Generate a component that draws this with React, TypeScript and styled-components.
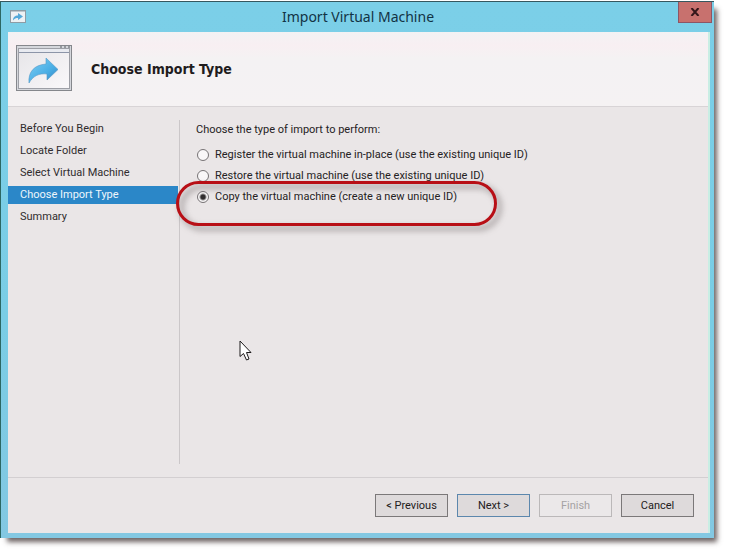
import React, { useState } from "react";
import styled, { createGlobalStyle, css } from "styled-components";

const uiFont = 'Roboto, "Noto Sans", sans-serif';
const headingFont = '"DejaVu Sans Condensed", "Noto Sans", sans-serif';

const GlobalStyle = createGlobalStyle`
  *, *::before, *::after { box-sizing: border-box; }
  body {
    margin: 0;
    background: #fff;
    color: #252223;
    font-family: "Noto Sans", sans-serif;
    font-size: 11px;
  }
`;

const Desktop = styled.div`
  display: flex;
  min-height: 100vh;
  padding: 1px 15px 15px 0;
  overflow: hidden;
`;

const Dialog = styled.section`
  position: relative;
  flex: 1;
  display: flex;
  flex-direction: column;
  min-width: 0;
  padding: 0 4px 5px 7px;
  background: linear-gradient(#7bcfe8, #7acde5 60%, #83c8e2);
  border-top: 1px solid #36575f;
  border-left: 1px solid #2c6763;
  box-shadow: 5px 6px 5px -2px rgba(60, 48, 48, 0.75);
`;

const TitleBar = styled.header`
  display: flex;
  align-items: center;
  height: 30px;
  padding-left: 2px;
`;

const Title = styled.h1`
  flex: 1;
  margin: 0;
  padding-left: 12px;
  text-align: center;
  font: 400 14px/30px "Noto Sans", sans-serif;
  color: #123345;
`;

const CloseButton = styled.button`
  display: grid;
  place-items: center;
  align-self: flex-start;
  width: 34px;
  height: 21px;
  margin-right: -2px;
  padding: 0;
  border: 1px solid #8d5565;
  border-top: 0;
  background: #c8716e;
`;

const Content = styled.div`
  flex: 1;
  display: flex;
  flex-direction: column;
  background: #eae6e7;
  border-right: 2px solid #c9eee4;
`;

const Banner = styled.div`
  display: flex;
  align-items: center;
  gap: 18px;
  height: 75px;
  padding: 0 8px;
  background: linear-gradient(#f3f2f4, #f8eff2 18%, #f4f2f3 36%, #f5f2f3);
  border-bottom: 1px solid #d8d4d6;
`;

const Heading = styled.h2`
  margin: 0;
  font: 700 14px/20px ${headingFont};
  color: #1f1c1d;
`;

const Columns = styled.div`
  flex: 1;
  display: flex;
  padding: 13px 0;
`;

const Steps = styled.nav`
  display: flex;
  flex-direction: column;
  gap: 4px;
  width: 172px;
  padding-right: 1px;
  border-right: 1px solid #cbc7c9;
`;

const Step = styled.a<{ $current?: boolean }>`
  padding-left: 12px;
  font: 400 11px/18px ${uiFont};
  color: #302c2e;
  text-decoration: none;
  ${(p) =>
    p.$current &&
    css`
      background: #2b87c8;
      color: #eef6fc;
    `}
`;

const Choices = styled.fieldset`
  position: relative;
  flex: 1;
  display: flex;
  flex-direction: column;
  gap: 3px;
  min-width: 0;
  margin: 0;
  padding: 0 0 0 16px;
  border: 0;
`;

const Legend = styled.legend`
  padding: 0 0 6px;
  font: 400 11px/20px ${uiFont};
`;

const Choice = styled.label`
  position: relative;
  display: flex;
  align-items: center;
  align-self: flex-start;
  gap: 6px;
  padding-left: 1px;
  font: 400 11px/18px ${uiFont};
  white-space: nowrap;
`;

const Radio = styled.input`
  appearance: none;
  width: 12px;
  height: 12px;
  margin: 0;
  border: 1px solid #777375;
  border-radius: 50%;
  background: #f9f7f8;
  &:checked {
    background: radial-gradient(circle, #302d2e 0 2px, #f9f7f8 4px);
  }
`;

const Highlight = styled.span`
  position: absolute;
  top: -7px;
  left: -20px;
  right: -40px;
  height: 45px;
  border: 3px solid #b80f16;
  border-radius: 23px;
  filter: drop-shadow(4px 4px 3px rgba(80, 70, 70, 0.6));
  pointer-events: none;
`;

const Pointer = styled.svg`
  position: absolute;
  top: 194px;
  left: 59px;
  pointer-events: none;
`;

const Footer = styled.footer`
  display: flex;
  justify-content: flex-end;
  gap: 9px;
  padding: 16px 14px;
  border-top: 1px solid #d3cfd1;
`;

const Button = styled.button<{ $primary?: boolean }>`
  width: 73px;
  height: 23px;
  padding: 0;
  border: 1px solid ${(p) => (p.$primary ? "#5c87ad" : "#7b7879")};
  border-radius: 0;
  background: #dedadb;
  color: #232021;
  font: 400 11px/18px ${uiFont};
  &:disabled {
    border-color: #bbb8b9;
    background: #ebe8e9;
    color: #a5a2a3;
  }
`;

const arrow = "M13 38C12 27 18 20 30 19V13L42 24.500L31 35V29C23 28 17 31 13 38Z";

function WindowIcon() {
  return (
    <svg width="16" height="14" viewBox="0 0 16 14" aria-hidden="true">
      <rect x=".5" y=".5" width="15" height="12" fill="#edf1f4" stroke="#8d9ca5" />
      <path d="M1 1.5H15" stroke="#bdc6cc" />
      <path d="M3 10.500C3 7 5 5.500 8 5.500V3L13 6.500L8 10V8C6 8 4.500 8.500 3 10.500Z" fill="#55a9d9" />
    </svg>
  );
}

function ImportIcon() {
  return (
    <svg width="57" height="48" viewBox="0 0 57 48" aria-hidden="true">
      <defs>
        <linearGradient id="arrow-fill" x1="0" y1="0" x2="1" y2="1">
          <stop stopColor="#82d0f4" />
          <stop offset=".6" stopColor="#49aee5" />
          <stop offset="1" stopColor="#347fbd" />
        </linearGradient>
        <linearGradient id="pane-fill" x1="0" y1="0" x2="1" y2="1">
          <stop stopColor="#e6e5e8" />
          <stop offset="1" stopColor="#faf8fa" />
        </linearGradient>
      </defs>
      <rect x=".5" y=".5" width="55" height="45" fill="#d5d7dc" stroke="#85878c" />
      <rect x="2.500" y="3.500" width="51" height="40" fill="url(#pane-fill)" stroke="#9d9fa6" />
      <rect x="3" y="4" width="50" height="3.500" fill="#e8eaf0" />
      <path d="M3 7.500H53" stroke="#8c95a8" />
      <path d="M44 2H46M48 2H50M52 2H54" stroke="#55585e" />
      <path d={arrow} fill="url(#arrow-fill)" stroke="#5297c6" strokeWidth=".6" />
    </svg>
  );
}

const steps = ["Before You Begin", "Locate Folder", "Select Virtual Machine", "Choose Import Type", "Summary"];
const choices = [
  { id: "register", label: "Register the virtual machine in-place (use the existing unique ID)" },
  { id: "restore", label: "Restore the virtual machine (use the existing unique ID)" },
  { id: "copy", label: "Copy the virtual machine (create a new unique ID)" },
];

export default function App() {
  const [selected, setSelected] = useState("copy");
  return (
    <>
      <GlobalStyle />
      <Desktop>
        <Dialog aria-labelledby="dialog-title">
          <TitleBar>
            <WindowIcon />
            <Title id="dialog-title">Import Virtual Machine</Title>
            <CloseButton aria-label="Close">
              <svg width="10" height="8" viewBox="0 0 10 8" aria-hidden="true">
                <path d="M1.500 0L8.500 8M8.500 0L1.500 8" stroke="#35171b" strokeWidth="2" />
              </svg>
            </CloseButton>
          </TitleBar>
          <Content>
            <Banner>
              <ImportIcon />
              <Heading>Choose Import Type</Heading>
            </Banner>
            <Columns>
              <Steps aria-label="Wizard steps">
                {steps.map((name) => (
                  <Step key={name} href="#" $current={name === "Choose Import Type"}>
                    {name}
                  </Step>
                ))}
              </Steps>
              <Choices>
                <Legend>Choose the type of import to perform:</Legend>
                {choices.map((c) => (
                  <Choice key={c.id}>
                    <Radio
                      type="radio"
                      name="import-type"
                      checked={selected === c.id}
                      onChange={() => setSelected(c.id)}
                    />
                    {c.label}
                    {c.id === "copy" && <Highlight />}
                  </Choice>
                ))}
                <Pointer width="13" height="21" viewBox="0 0 13 21" aria-hidden="true">
                  <path
                    d="M1 1V16.500L4.500 13.500L7.500 20L10 19L7.500 12.500H12Z"
                    fill="#fff"
                    stroke="#1c1a1b"
                  />
                </Pointer>
              </Choices>
            </Columns>
            <Footer>
              <Button>&lt; Previous</Button>
              <Button $primary>Next &gt;</Button>
              <Button disabled>Finish</Button>
              <Button>Cancel</Button>
            </Footer>
          </Content>
        </Dialog>
      </Desktop>
    </>
  );
}
